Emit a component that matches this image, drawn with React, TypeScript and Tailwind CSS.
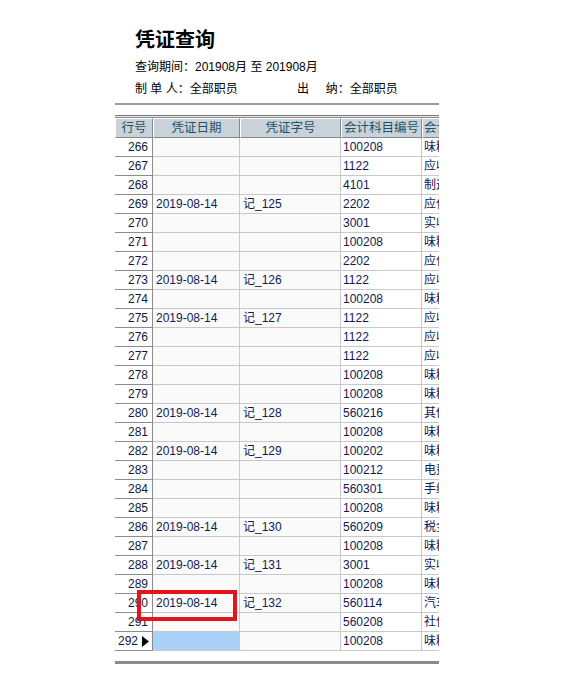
import React from "react";

type Row = [string, string, string, string, string];

const rows: Row[] = [
  ["266", "", "", "100208", "味精"],
  ["267", "", "", "1122", "应收"],
  ["268", "", "", "4101", "制造"],
  ["269", "2019-08-14", "记_125", "2202", "应付"],
  ["270", "", "", "3001", "实收"],
  ["271", "", "", "100208", "味精"],
  ["272", "", "", "2202", "应付"],
  ["273", "2019-08-14", "记_126", "1122", "应收"],
  ["274", "", "", "100208", "味精"],
  ["275", "2019-08-14", "记_127", "1122", "应收"],
  ["276", "", "", "1122", "应收"],
  ["277", "", "", "1122", "应收"],
  ["278", "", "", "100208", "味精"],
  ["279", "", "", "100208", "味精"],
  ["280", "2019-08-14", "记_128", "560216", "其他"],
  ["281", "", "", "100208", "味精"],
  ["282", "2019-08-14", "记_129", "100202", "味精"],
  ["283", "", "", "100212", "电费"],
  ["284", "", "", "560301", "手续"],
  ["285", "", "", "100208", "味精"],
  ["286", "2019-08-14", "记_130", "560209", "税金"],
  ["287", "", "", "100208", "味精"],
  ["288", "2019-08-14", "记_131", "3001", "实收"],
  ["289", "", "", "100208", "味精"],
  ["290", "2019-08-14", "记_132", "560114", "汽车"],
  ["291", "", "", "560208", "社保"],
  ["292", "", "", "100208", "味精"],
];

const font = {
  fontFamily: '"Liberation Sans", "Noto Sans CJK SC", sans-serif',
};

export default function App() {
  return (
    <div
      className="relative w-[579px] h-[680px] bg-white overflow-hidden text-[12px] text-black"
      style={font}
    >
      <div className="ml-[115px] w-[324px] pt-[28px]">
        <div className="pl-[20px]">
          <div className="h-[24px] leading-[24px] text-[20px] font-bold tracking-[0px]">
            凭证查询
          </div>
          <div className="mt-[4px] h-[22px] leading-[22px] whitespace-pre">
            查询期间：201908月 至 201908月
          </div>
          <div className="h-[22px] leading-[22px] flex whitespace-pre">
            <span className="w-[162px]">制 单 人：全部职员</span>
            <span>出     纳：全部职员</span>
          </div>
        </div>
        <div className="mt-[3px] h-[2px] bg-[#9c9c9c]" />
        <div className="mt-[10px] h-[1px] bg-[#7a7a7a]" />
        <div className="h-[1px] bg-[#e8e8e8]" />
        <div className="h-[1px] bg-[#8a8a8a]" />
        <div className="grid grid-cols-[38px_87px_101px_81px_17px] overflow-hidden">
          {["行号", "凭证日期", "凭证字号", "会计科目编号", "会计"].map((h, i) => (
            <div
              key={h}
              className={
                "h-[20px] leading-[19px] bg-[#c9d2d8] text-[#1f5266] text-[12.5px] whitespace-nowrap overflow-hidden border-b border-r border-b-[#7f8a90] border-r-[#7f8a90] border-l border-t border-l-white border-t-white " +
                (i === 4 ? "text-left pl-[1px] border-r-0" : "text-center")
              }
            >
              {h}
            </div>
          ))}
          {rows.map((r, idx) => {
            const last = idx === rows.length - 1;
            return (
              <React.Fragment key={r[0]}>
                <div className="h-[19px] leading-[18px] bg-white border-r border-b border-[#8c8c8c] text-right pr-[4px] text-[#101840] flex justify-end items-center">
                  <span>{r[0]}</span>
                  {last && (
                    <svg width="7" height="11" viewBox="0 0 7 11" className="ml-[4px] mr-[-1px]">
                      <path d="M0 0 L7 5.5 L0 11 Z" fill="#000" />
                    </svg>
                  )}
                </div>
                <div
                  className={
                    "h-[19px] leading-[18px] border-r border-b border-[#c8c8c8] pl-[3px] text-[#0f1a55] " +
                    (last ? "bg-[#a9d0f7]" : "bg-[#fafafa]")
                  }
                >
                  {r[1]}
                </div>
                <div className="h-[19px] leading-[18px] border-r border-b border-[#c8c8c8] pl-[3px] text-[#0f1a55] bg-[#fafafa]">
                  {r[2]}
                </div>
                <div className="h-[19px] leading-[18px] border-r border-b border-[#c8c8c8] pl-[2px] text-[#0f1a55] bg-white">
                  {r[3]}
                </div>
                <div className="h-[19px] leading-[18px] border-b border-[#c8c8c8] pl-[2px] text-[#0f1a55] bg-white whitespace-nowrap overflow-hidden">
                  {r[4]}
                </div>
              </React.Fragment>
            );
          })}
        </div>
        <div className="mt-[10px] h-[3px] bg-[#8a8a8a]" />
      </div>
      <div className="absolute left-[137px] top-[590px] w-[100px] h-[31px] border-[4px] border-[#e5141c]" />
    </div>
  );
}
